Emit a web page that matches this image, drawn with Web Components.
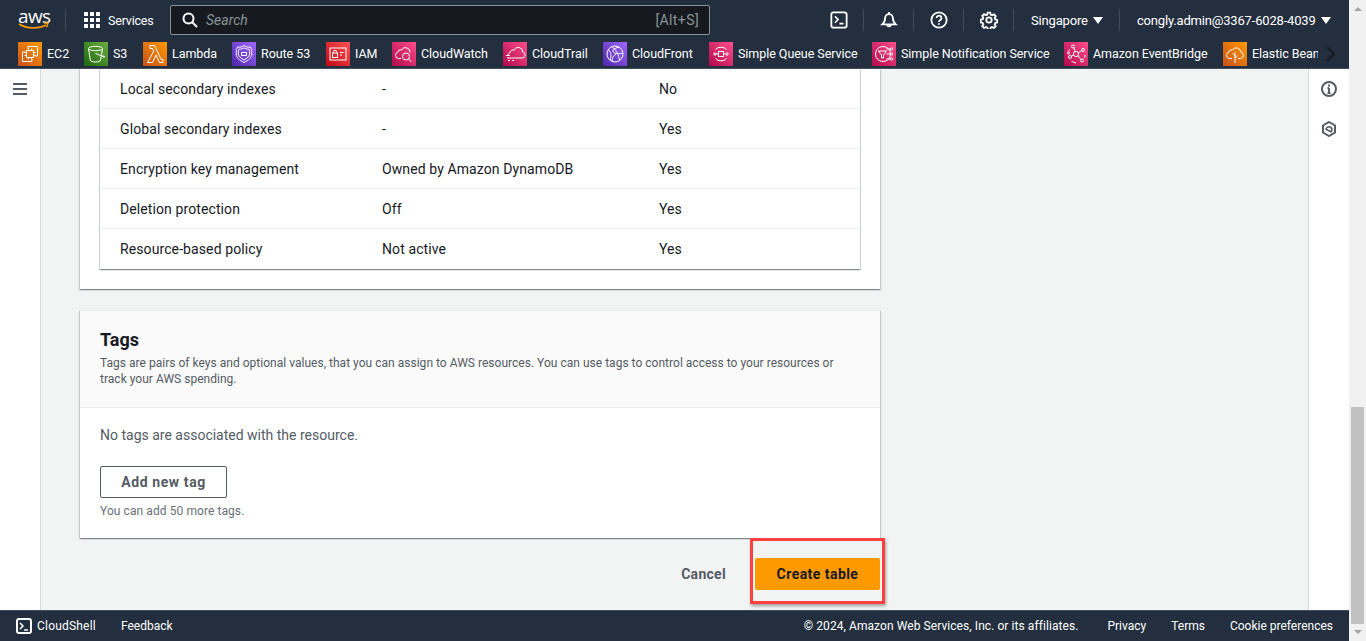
<!DOCTYPE html>
<html>
<head>
<meta charset="utf-8">
<title>Create table</title>
<style>
  html, body { margin: 0; height: 100%; overflow: hidden; }
  body { font-family: Roboto, "Liberation Sans", sans-serif; font-size: 14px; color: #16191f; }
</style>
</head>
<body>
<console-page></console-page>
<script>
(function () {
  const ICON_BG = {
    orange: 'linear-gradient(45deg, #c8511b, #ff9900)',
    green: 'linear-gradient(45deg, #1b660f, #6cae3e)',
    purple: 'linear-gradient(45deg, #4d27a8, #a166ff)',
    red: 'linear-gradient(45deg, #bd0816, #ff5252)',
    pink: 'linear-gradient(45deg, #b0084d, #ff4f8b)',
  };

  const SERVICES = [
    { name: 'EC2', bg: 'orange', width: 66, svg: '<path d="M10 7V4.500h9.500V14H17M7 10H4.500v9.500H14V17"/><rect x="8.500" y="8.500" width="7" height="7"/><path d="M10.500 6.500v2M13.500 6.500v2M10.500 15.500v2M13.500 15.500v2M6.500 10.500h2M6.500 13.500h2M15.500 10.500h2M15.500 13.500h2"/>' },
    { name: 'S3', bg: 'green', width: 59, svg: '<ellipse cx="11.500" cy="6.500" rx="7" ry="2.200"/><path d="M4.500 6.500 6.300 18c.2 1.300 2.600 2 5.200 2s5-.7 5.200-2l1.800-11.500M11.500 11.500l8 3"/><circle cx="19.800" cy="14.600" r=".8"/>' },
    { name: 'Lambda', bg: 'orange', width: 89, svg: '<path d="M4.500 20.500h5l3.500-7.500 3.500 7.500h3.500v-3h-1.800L11.500 3.500H7v3h2.500l1.200 2.700z"/>' },
    { name: 'Route 53', bg: 'purple', width: 94, svg: '<path d="M12 3.500c2 1.500 4 2 6.500 1.500.2 1.300.8 2 1.500 2.500-.8 1.500-.8 3 0 4.500-.8 3.500-3 6-8 8.500-5-2.500-7.200-5-8-8.500.8-1.500.8-3 0-4.500.7-.5 1.300-1.200 1.500-2.500 2.500.5 4.500 0 6.500-1.500z"/><path d="M12 5.800c1.600 1 3 1.400 4.800 1.300.2.800.5 1.300 1 1.800-.5 1-.5 2 0 3-.7 2.400-2.400 4.200-5.800 6.100-3.400-1.900-5.100-3.700-5.800-6.100.5-1 .5-2 0-3 .5-.5.8-1 1-1.800C9 7.200 10.400 6.800 12 5.800zM9.500 10.500h5v3h-5z"/>' },
    { name: 'IAM', bg: 'red', width: 66, svg: '<rect x="4" y="6" width="16" height="12"/><rect x="6.500" y="11" width="5" height="4.500"/><path d="M7.500 11V9.800a1.500 1.500 0 0 1 3 0V11M14 10.500h3.500M14 13h2"/>' },
    { name: 'CloudWatch', bg: 'pink', width: 111, svg: '<path d="M9 16.500H6.500a3.200 3.200 0 0 1-.6-6.300 3 3 0 0 1 3.600-2.400 4.600 4.600 0 0 1 8.500 2.700"/><circle cx="14" cy="14.500" r="3.500"/><path d="m16.500 17 3 2.800"/>' },
    { name: 'CloudTrail', bg: 'pink', width: 100, svg: '<path d="M4 16h15.500a3 3 0 0 0 .3-5.900 4.500 4.500 0 0 0-8.600-2 3 3 0 0 0-4 2.300A3 3 0 0 0 5 13M3 13.500h4M5 18.500h2M9 18.500h2"/>' },
    { name: 'CloudFront', bg: 'purple', width: 106, svg: '<circle cx="12" cy="12" r="8"/><path d="M5.500 8c3 3 3 6 1.500 10M9 4.800c4 3 7 8 7.500 14M16 5c-3 1-5 1.500-6.500 4M9.500 9c2 2.500 5 3.500 10 2M9 19c0-3 1-5 4-7"/>' },
    { name: 'Simple Queue Service', bg: 'pink', width: 163, svg: '<rect x="9.500" y="9.500" width="5" height="5"/><circle cx="6" cy="12" r="1.200"/><circle cx="18" cy="12" r="1.200"/><path d="M6.500 7.500a7.500 7.500 0 0 1 11 0M6.500 16.500a7.500 7.500 0 0 0 11 0M7.500 12h2M14.500 12h2"/>' },
    { name: 'Simple Notification Service', bg: 'pink', width: 192, svg: '<circle cx="11" cy="12" r="7.500"/><path d="M6.500 9h8l-3 4v3h-2v-3zM14.500 12h4M14.500 7h4M14.500 17h4"/><circle cx="19.500" cy="7" r="1.200"/><circle cx="19.500" cy="12" r="1.200"/><circle cx="19.500" cy="17" r="1.200"/>' },
    { name: 'Amazon EventBridge', bg: 'pink', width: 159, svg: '<circle cx="12" cy="12" r="2.600"/><circle cx="9" cy="4.500" r="1.500"/><circle cx="19" cy="8" r="1.500"/><circle cx="18" cy="18.500" r="1.500"/><circle cx="6" cy="15" r="1.500"/><circle cx="4.500" cy="11" r="1"/><path d="m10 6 1 3.500M17.500 8.700 14.300 11M16.800 17.300 14 13.800M7.300 14.200 9.600 13M6 7.500a9 9 0 0 0-2 2M12 21a9 9 0 0 1-4.500-2M21 13a9 9 0 0 1-.5 3"/>' },
    { name: 'Elastic Beanstalk', bg: 'orange', width: 130, svg: '<path d="M9 16.500H6.500a3.200 3.200 0 0 1-.6-6.300 3 3 0 0 1 3.600-2.400 4.600 4.600 0 0 1 8.300 2.200 3.300 3.300 0 0 1-.3 6.500H15"/><path d="M12 21V10M12 14l-2.500-2.500M12 16l2.500-2.500"/>' },
  ];

  function el(html) {
    const template = document.createElement('template');
    template.innerHTML = html;
    return template.content.cloneNode(true);
  }

  class BarIcon extends HTMLElement {
    connectedCallback() {
      const kind = this.getAttribute('kind');
      const paths = {
        shell: '<rect x="1.500" y="1.500" width="17" height="17" rx="2.500"/><path d="m5.500 6 3.500 3.500L5.500 13M10.500 14h4.500" stroke-width="1.800"/>',
        bell: '<path d="M10 3.500a4.300 4.300 0 0 0-4.300 4.300c0 3-1 5-3.200 7h15c-2.200-2-3.200-4-3.200-7A4.300 4.300 0 0 0 10 3.500zM8 15a2 2 0 0 0 4 0M10 1v2.500"/>',
        help: '<circle cx="10" cy="10" r="8.500"/><path d="M7.300 7.800a2.700 2.700 0 1 1 4.100 2.300c-.9.600-1.400 1-1.400 2.200"/><path d="M10 13.600v1.700"/>',
        gear: '<circle cx="10" cy="10" r="3"/><path d="M8.600 1.800h2.800l.5 2.300 1.500.7 2.100-1.100 2 2-1.200 2 .7 1.600 2.200.6v2.800l-2.200.6-.7 1.600 1.200 2-2 2-2.100-1.100-1.500.7-.5 2.200H8.600l-.5-2.200-1.500-.7-2.100 1.100-2-2 1.200-2-.7-1.600-2.200-.6V9.700l2.200-.6.700-1.600-1.200-2 2-2 2.100 1.100 1.500-.7z"/>',
      };
      this.attachShadow({ mode: 'open' }).append(el(`
        <style>
          :host { display: flex; width: 50px; height: 22px; align-items: center; justify-content: center; box-sizing: border-box; border-right: 1px solid #414d5c; }
          svg { width: 18px; height: 18px; fill: none; stroke: #fff; stroke-width: 2; }
        </style>
        <svg viewBox="0 0 20 20">${paths[kind]}</svg>
      `));
    }
  }

  class TopBar extends HTMLElement {
    constructor() {
      super();
      let dots = '';
      for (let y = 0; y < 3; y += 1) {
        for (let x = 0; x < 3; x += 1) {
          dots += `<rect x="${x * 6}" y="${y * 6}" width="4" height="4" rx=".5"/>`;
        }
      }
      this.attachShadow({ mode: 'open' }).append(el(`
        <style>
          :host { display: flex; height: 40px; align-items: center; background: #232f3e; color: #fff; font-size: 13px; flex: none; }
          .logo { height: 22px; margin-left: 18px; border-right: 1px solid #414d5c; position: relative; flex: none; width: 47px; }
          .logo span { position: absolute; left: 0; top: -4px; font: 400 19px/22px "Open Sans", sans-serif; letter-spacing: -.6px; }
          .logo svg { position: absolute; left: 0; top: 13px; }
          .services { display: flex; align-items: center; gap: 8px; margin-left: 18px; width: 86px; flex: none; font-size: 12.500px; letter-spacing: -.2px; }
          .services svg { width: 16px; height: 16px; fill: #fff; flex: none; }
          .search { display: flex; align-items: center; width: 540px; height: 30px; box-sizing: border-box; background: #16191f; border: 1px solid #879596; border-radius: 2px; padding: 0 10px 0 11px; flex: none; color: #879596; font-size: 14px; }
          .search svg { width: 16px; height: 16px; fill: none; stroke: #fff; stroke-width: 2; margin-right: 8px; }
          .search i { flex: 1; }
          .search span { letter-spacing: .4px; }
          .icons { display: flex; margin-left: 104px; }
          .pick { display: flex; align-items: center; height: 22px; box-sizing: border-box; flex: none; letter-spacing: -.18px; }
          .region { width: 106px; padding-left: 17px; border-right: 1px solid #414d5c; }
          .user { padding-left: 17px; }
          .caret { width: 0; height: 0; border: 5px solid transparent; border-top: 7px solid #fff; border-bottom: 0; margin-left: 5px; }
        </style>
        <div class="logo"><span>aws</span>
          <svg width="32" height="8" viewBox="0 0 32 8" fill="none"><path d="M1 2c8 5 20 5 27 1" stroke="#ff9900" stroke-width="1.800"/><path d="m26 1 4 .2-1.400 4" stroke="#ff9900" stroke-width="1.400"/></svg>
        </div>
        <div class="services"><svg viewBox="0 0 16 16">${dots}</svg><span>Services</span></div>
        <div class="search">
          <svg viewBox="0 0 16 16"><circle cx="6.500" cy="6.500" r="5"/><path d="m10 10 5 5"/></svg>
          <i>Search</i><span>[Alt+S]</span>
        </div>
        <div class="icons">
          <bar-icon kind="shell"></bar-icon>
          <bar-icon kind="bell"></bar-icon>
          <bar-icon kind="help"></bar-icon>
          <bar-icon kind="gear"></bar-icon>
        </div>
        <div class="pick region">Singapore<span class="caret"></span></div>
        <div class="pick user">congly.admin@3367-6028-4039<span class="caret"></span></div>
      `));
    }
  }

  class ServiceLink extends HTMLElement {
    connectedCallback() {
      const s = SERVICES[+this.getAttribute('index')];
      this.style.setProperty('--pitch', `${s.width}px`);
      this.attachShadow({ mode: 'open' }).append(el(`
        <style>
          :host { display: flex; align-items: center; gap: 5px; width: var(--pitch); flex: none; color: #fff; font-size: 12.500px; letter-spacing: -.05px; white-space: nowrap; }
          .box { width: 24px; height: 24px; flex: none; background: ${ICON_BG[s.bg]}; }
          svg { display: block; width: 24px; height: 24px; fill: none; stroke: #fff; stroke-width: 1; }
        </style>
        <div class="box"><svg viewBox="0 0 24 24">${s.svg}</svg></div>
        <span>${s.name}</span>
      `));
    }
  }

  class ServiceBar extends HTMLElement {
    constructor() {
      super();
      const links = SERVICES.map((s, i) => `<service-link index="${i}"></service-link>`).join('');
      this.attachShadow({ mode: 'open' }).append(el(`
        <style>
          :host { display: flex; align-items: center; height: 29px; box-sizing: border-box; background: #232f3e; border-bottom: 1px solid #414d5c; padding: 0 0 1px 18px; flex: none; }
          .list { display: flex; width: 1300px; overflow: hidden; flex: none; }
          svg { width: 12px; height: 16px; margin-left: 7px; fill: none; stroke: #16191f; stroke-width: 2; flex: none; }
        </style>
        <div class="list">${links}</div>
        <svg viewBox="0 0 12 16"><path d="m2 1 7 7-7 7"/></svg>
      `));
    }
  }

  class SideNav extends HTMLElement {
    constructor() {
      super();
      this.attachShadow({ mode: 'open' }).append(el(`
        <style>
          :host { display: block; width: 41px; box-sizing: border-box; background: #fff; border-right: 1px solid #d5dbdb; padding: 14px 0 0 13px; flex: none; }
          svg { display: block; width: 14px; height: 12px; stroke: #545b64; stroke-width: 2; }
        </style>
        <svg viewBox="0 0 14 12"><path d="M0 1h14M0 6h14M0 11h14"/></svg>
      `));
    }
  }

  class ToolRail extends HTMLElement {
    constructor() {
      super();
      this.attachShadow({ mode: 'open' }).append(el(`
        <style>
          :host { display: block; width: 41px; box-sizing: border-box; background: #fff; border-left: 1px solid #d5dbdb; flex: none; }
          div { display: flex; height: 40px; align-items: center; justify-content: center; }
          div:first-child { border-bottom: 1px solid #d5dbdb; }
          svg { width: 16px; height: 16px; fill: none; stroke: #545b64; stroke-width: 2; }
        </style>
        <div><svg viewBox="0 0 16 16"><circle cx="8" cy="8" r="7"/><path d="M8 7v5M6.500 12h3M6.500 7H8M8 3.500v2"/></svg></div>
        <div><svg viewBox="0 0 16 16"><path d="M8 1l6 3.500v7L8 15l-6-3.500v-7z"/><path d="M5 9a3 3 0 1 1 5 2M5.500 8.500l5 2.500" stroke-width="1.600"/></svg></div>
      `));
    }
  }

  class KeyValueRow extends HTMLElement {
    connectedCallback() {
      const [a, b, c] = ['name', 'value', 'editable'].map((k) => this.getAttribute(k));
      this.attachShadow({ mode: 'open' }).append(el(`
        <style>
          :host { display: grid; grid-template-columns: 262px 277px 1fr; align-items: center; height: 40px; box-sizing: border-box; padding-left: 20px; border-bottom: 1px solid #eaeded; letter-spacing: .1px; }
          :host(:last-child) { border-bottom: 0; }
        </style>
        <span>${a}</span><span>${b}</span><span>${c}</span>
      `));
    }
  }

  class PanelCard extends HTMLElement {
    constructor() {
      super();
      this.attachShadow({ mode: 'open' }).append(el(`
        <style>
          :host { display: block; background: #fff; box-shadow: 0 1px 1px 0 rgba(0, 28, 36, .3), 1px 1px 1px 0 rgba(0, 28, 36, .15), -1px 1px 1px 0 rgba(0, 28, 36, .15); }
        </style>
        <slot></slot>
      `));
    }
  }

  class TagsSection extends HTMLElement {
    constructor() {
      super();
      this.attachShadow({ mode: 'open' }).append(el(`
        <style>
          :host { display: block; }
          header { height: 98px; box-sizing: border-box; padding: 18px 20px 0; background: #fafafa; border-top: 1px solid #eaeded; border-bottom: 1px solid #eaeded; }
          h2 { margin: 0; font-size: 18px; line-height: 22px; font-weight: 700; color: #16191f; }
          p { margin: 4px 0 0; max-width: 740px; font-size: 12px; line-height: 16px; letter-spacing: .02px; color: #545b64; }
          .body { height: 130px; box-sizing: border-box; padding: 18px 20px 0; color: #545b64; }
          .none { line-height: 18px; }
          button { display: block; margin-top: 22px; width: 127px; height: 32px; background: #fff; border: 1px solid #545b64; border-radius: 2px; font: 700 14px Roboto, sans-serif; color: #545b64; letter-spacing: .6px; }
          small { display: block; margin-top: 5px; font-size: 12px; line-height: 16px; letter-spacing: .08px; color: #687078; }
        </style>
        <header>
          <h2>Tags</h2>
          <p>Tags are pairs of keys and optional values, that you can assign to AWS resources. You can use tags to control access to your resources or track your AWS spending.</p>
        </header>
        <div class="body">
          <div class="none">No tags are associated with the resource.</div>
          <button>Add new tag</button>
          <small>You can add 50 more tags.</small>
        </div>
      `));
    }
  }

  class FormActions extends HTMLElement {
    constructor() {
      super();
      this.attachShadow({ mode: 'open' }).append(el(`
        <style>
          :host { display: flex; justify-content: flex-end; align-items: center; gap: 29px; margin-top: 20px; font-weight: 700; letter-spacing: .45px; }
          .cancel { color: #545b64; letter-spacing: .3px; }
          .create { position: relative; display: flex; width: 125px; height: 32px; align-items: center; justify-content: center; background: #ff9900; border-radius: 2px; color: #16191f; }
          .create::after { content: ""; position: absolute; left: -5px; right: -5px; top: -20px; bottom: -14px; border: 3px solid #ff4040; box-shadow: 1px 2px 3px rgba(0, 0, 0, .35); }
        </style>
        <span class="cancel">Cancel</span>
        <span class="create">Create table</span>
      `));
    }
  }

  class PageFooter extends HTMLElement {
    constructor() {
      super();
      this.attachShadow({ mode: 'open' }).append(el(`
        <style>
          :host { display: flex; align-items: center; height: 31px; box-sizing: border-box; background: #232f3e; border-top: 1px solid #414d5c; color: #fff; font-size: 12px; flex: none; padding-left: 16px; padding-right: 16px; }
          .shell { display: flex; align-items: center; gap: 5px; margin-right: 25px; letter-spacing: .2px; }
          svg { width: 16px; height: 16px; fill: none; stroke: #fff; stroke-width: 2; }
          .legal { margin-left: auto; margin-right: 29px; letter-spacing: .07px; }
          .link { margin-left: 25px; }
        </style>
        <div class="shell"><svg viewBox="0 0 16 16"><rect x="1" y="1" width="14" height="14" rx="2"/><path d="m4 5 3 3-3 3M8 12h4" stroke-width="1.500"/></svg>CloudShell</div>
        <span>Feedback</span>
        <span class="legal">© 2024, Amazon Web Services, Inc. or its affiliates.</span>
        <span>Privacy</span><span class="link">Terms</span><span class="link">Cookie preferences</span>
      `));
    }
  }

  class FakeScrollbar extends HTMLElement {
    constructor() {
      super();
      this.attachShadow({ mode: 'open' }).append(el(`
        <style>
          :host { display: flex; flex-direction: column; align-items: center; width: 17px; background: #f1f1f1; flex: none; }
          .up, .down { width: 0; height: 0; border: 4px solid transparent; }
          .up { border-bottom: 4px solid #a3a3a3; border-top: 0; margin-top: 7px; }
          .thumb { width: 13px; height: 217px; background: #c1c1c1; margin-top: auto; }
          .down { border-top: 4px solid #a3a3a3; border-bottom: 0; margin: 6px 0 7px; }
        </style>
        <span class="up"></span><span class="thumb"></span><span class="down"></span>
      `));
    }
  }

  class ConsolePage extends HTMLElement {
    constructor() {
      super();
      const rows = [
        ['Local secondary indexes', '-', 'No'],
        ['Global secondary indexes', '-', 'Yes'],
        ['Encryption key management', 'Owned by Amazon DynamoDB', 'Yes'],
        ['Deletion protection', 'Off', 'Yes'],
        ['Resource-based policy', 'Not active', 'Yes'],
      ].map((r) => `<kv-row name="${r[0]}" value="${r[1]}" editable="${r[2]}"></kv-row>`).join('');
      this.attachShadow({ mode: 'open' }).append(el(`
        <style>
          :host { display: flex; height: 641px; overflow: hidden; }
          .page { display: flex; flex-direction: column; width: 1349px; flex: none; }
          .middle { display: flex; flex: 1; min-height: 0; }
          main { flex: 1; min-width: 0; background: #f2f3f3; padding-left: 39px; overflow: hidden; }
          .column { width: 800px; }
          .first { padding: 0 20px 20px; border-radius: 0; }
          .tags { display: block; margin-top: 21px; }
        </style>
        <div class="page">
          <top-bar></top-bar>
          <service-bar></service-bar>
          <div class="middle">
            <side-nav></side-nav>
            <main>
              <div class="column">
                <panel-card class="first"><panel-card>${rows}</panel-card></panel-card>
                <panel-card class="tags"><tags-section></tags-section></panel-card>
                <form-actions></form-actions>
              </div>
            </main>
            <tool-rail></tool-rail>
          </div>
          <page-footer></page-footer>
        </div>
        <fake-scrollbar></fake-scrollbar>
      `));
    }
  }

  customElements.define('bar-icon', BarIcon);
  customElements.define('top-bar', TopBar);
  customElements.define('service-link', ServiceLink);
  customElements.define('service-bar', ServiceBar);
  customElements.define('side-nav', SideNav);
  customElements.define('tool-rail', ToolRail);
  customElements.define('kv-row', KeyValueRow);
  customElements.define('panel-card', PanelCard);
  customElements.define('tags-section', TagsSection);
  customElements.define('form-actions', FormActions);
  customElements.define('page-footer', PageFooter);
  customElements.define('fake-scrollbar', FakeScrollbar);
  customElements.define('console-page', ConsolePage);
}());
</script>
</body>
</html>
